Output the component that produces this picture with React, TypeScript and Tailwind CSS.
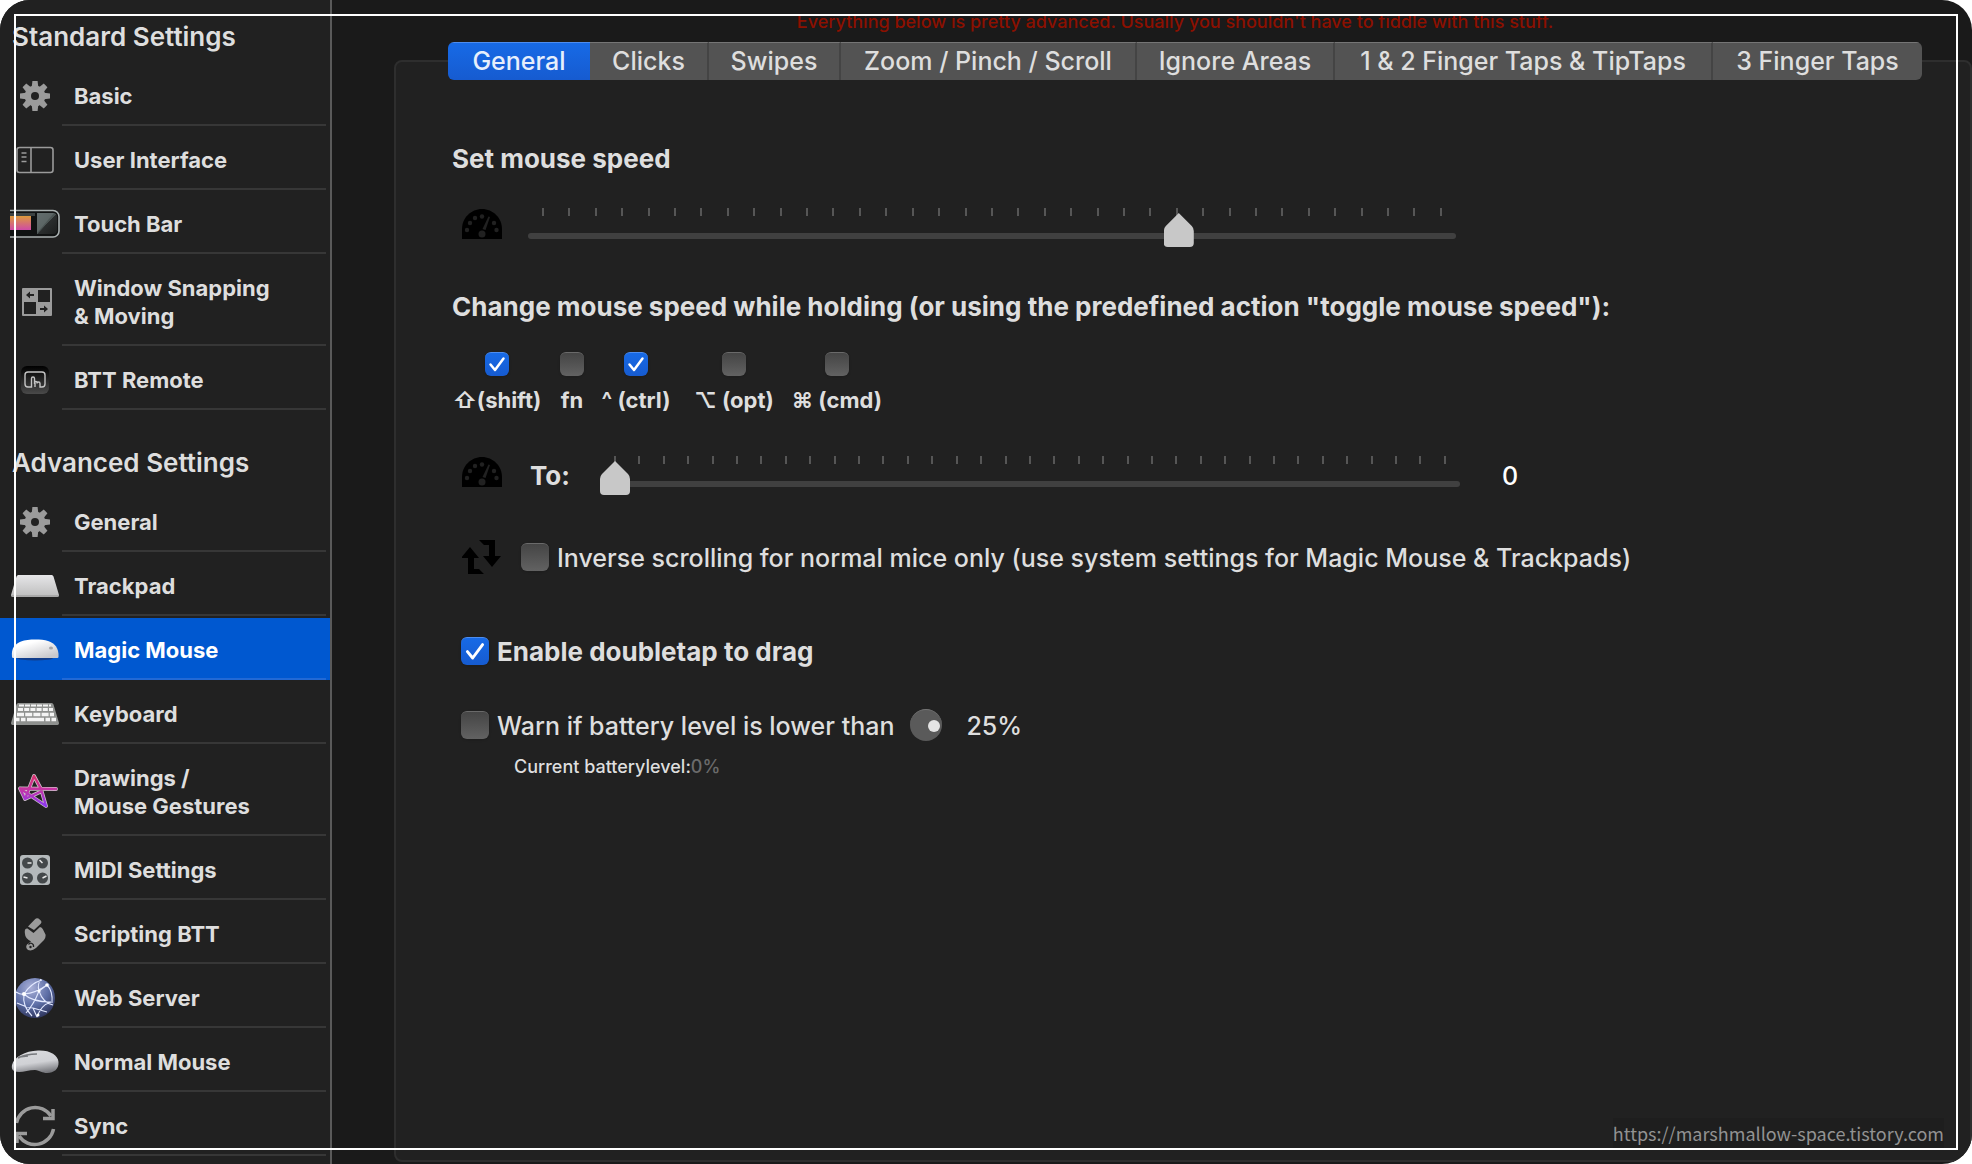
import { useState, type ReactNode } from "react";

type SidebarItem = {
  id: string;
  label: string[];
  icon: ReactNode;
};

function GearIcon() {
  return (
    <svg width="30" height="30" viewBox="0 0 30 30" className="text-[#9b9b9b]">
      <g fill="currentColor">
        {[0, 45, 90, 135].map((angle) => (
          <path key={angle} d="M12.4 0h5.2l.7 6v18l-.7 6h-5.2l-.7-6V6z" transform={`rotate(${angle} 15 15)`} />
        ))}
        <circle cx="15" cy="15" r="10.4" />
      </g>
      <circle cx="15" cy="15" r="4" fill="#212121" />
    </svg>
  );
}

function InterfaceIcon() {
  return (
    <svg width="38" height="28" viewBox="0 0 38 28" fill="none" stroke="#9b9b9b">
      <rect x="1" y="1.5" width="36" height="25" rx="2.5" strokeWidth="1.6" />
      <path d="M15 1.5v25" strokeWidth="1.6" />
      <path d="M5.5 7h5M5.5 11h5M5.5 15.5h5" strokeWidth="1.6" />
    </svg>
  );
}

function TouchBarIcon() {
  return (
    <svg width="50" height="30" viewBox="0 0 50 30" className="shrink-0">
      <defs>
        <linearGradient id="tb-color" x1="0" y1="0" x2="0" y2="1">
          <stop offset="0" stopColor="#dd9a3b" />
          <stop offset="1" stopColor="#cf4aa6" />
        </linearGradient>
        <linearGradient id="tb-glass" x1="0" y1="0" x2="1" y2="1">
          <stop offset="0" stopColor="#5c6665" />
          <stop offset="0.5" stopColor="#4a5352" />
          <stop offset="0.51" stopColor="#2b2e2e" />
          <stop offset="1" stopColor="#1c1e1e" />
        </linearGradient>
      </defs>
      <path d="M0 1.5h43a6 6 0 0 1 6 6v14.500a6 6 0 0 1-6 6H0" fill="#101212" stroke="#a9b0b0" strokeWidth="1.6" />
      <path d="M0 4h25v3H0z" fill="#3c4241" />
      <path d="M0 7h21v14H0z" fill="url(#tb-color)" />
      <path d="M27 4h16a4 4 0 0 1 4 4v13a4 4 0 0 1-4 4H27z" fill="url(#tb-glass)" />
      <path d="M27 4h17L27 24z" fill="#6b7675" opacity="0.5" />
    </svg>
  );
}

function SnappingIcon() {
  return (
    <svg width="34" height="28" viewBox="-4 0 34 28">
      <rect width="30" height="28" rx="1" fill="#9b9b9b" />
      <path d="M16 2h12v12H16zM2 14h12v12H2z" fill="#212121" />
      <path d="M4 7l4-3.500V6h4v2H8v2.500zM26 21l-4-3.500V20h-4v2h4v2.500z" fill="#212121" />
    </svg>
  );
}

function RemoteIcon() {
  return (
    <svg width="30" height="30" viewBox="0 0 30 30">
      <defs>
        <linearGradient id="remote" x1="0" y1="0" x2="0" y2="1">
          <stop offset="0" stopColor="#000" />
          <stop offset="1" stopColor="#4a4a4a" />
        </linearGradient>
      </defs>
      <rect x="1" y="1" width="28" height="28" rx="6" fill="url(#remote)" />
      <path
        d="M11.500 22H8a3 3 0 0 1-3-3V10a3 3 0 0 1 3-3h14a3 3 0 0 1 3 3v9a3 3 0 0 1-3 3h-2v-3.500a1.500 1.500 0 0 0-3 0V17a1.500 1.500 0 0 0-2.500 0v-3.500a1.500 1.500 0 0 0-3 0zM15 17v5"
        fill="none"
        stroke="#c4c4c4"
        strokeWidth="1.4"
      />
    </svg>
  );
}

function TrackpadIcon() {
  return (
    <svg width="48" height="24" viewBox="0 0 48 24">
      <defs>
        <linearGradient id="trackpad" x1="0" y1="0" x2="0" y2="1">
          <stop offset="0" stopColor="#e6e6e8" />
          <stop offset="1" stopColor="#bdbdbd" />
        </linearGradient>
      </defs>
      <path d="M7.500 1h33a2 2 0 0 1 2 1.500L48 21a2 2 0 0 1-1.500 2h-45A2 2 0 0 1 0 21L5.500 2.500a2 2 0 0 1 2-1.500z" fill="url(#trackpad)" />
      <path d="M.5 22h47" stroke="#929292" />
    </svg>
  );
}

function MagicMouseIcon() {
  return (
    <svg width="48" height="24" viewBox="0 0 48 24">
      <defs>
        <linearGradient id="magic" x1="0" y1="0" x2="0.7" y2="1">
          <stop offset="0.3" stopColor="#fff" />
          <stop offset="1" stopColor="#c9c9cd" />
        </linearGradient>
      </defs>
      <ellipse cx="24" cy="20" rx="18" ry="2.5" fill="#123e8c" />
      <path d="M1 19C0 10 4 6 10 3.500 17 1 30 1 37 3c7 2.500 11 7 10.500 16-.1.700-.8 1-1.500 1H2.500C1.700 20 1.100 19.700 1 19z" fill="url(#magic)" />
      <ellipse cx="40" cy="10" rx="2" ry="1.5" fill="#a5a5a8" />
    </svg>
  );
}

function KeyboardIcon() {
  return (
    <svg width="48" height="24" viewBox="0 0 48 24">
      <path d="M7.500 1h33a2 2 0 0 1 2 1.500L48 21a2 2 0 0 1-1.500 2h-45A2 2 0 0 1 0 21L5.500 2.500a2 2 0 0 1 2-1.500z" fill="#8f918f" />
      <g stroke="#f4f4f4" fill="none">
        <path d="M8 3.500h32" strokeWidth="2" strokeDasharray="5 1" />
        <path d="M7 7.500h35" strokeWidth="3" strokeDasharray="5 1.2" />
        <path d="M6 12.500h37" strokeWidth="3.5" strokeDasharray="7 1.2" />
        <path d="M4 17.500h4.500M10 17.500h4.500M16 17.500h17M34.500 17.500h4.500M40.500 17.500h4.500" strokeWidth="3.5" />
      </g>
    </svg>
  );
}

function StarIcon() {
  const star = "M44 15 8 14.500 13 25 22 2 29 15 34 32 8 14.500M13 25 28 18";
  return (
    <svg width="46" height="36" viewBox="0 0 46 36" fill="none" strokeLinejoin="round" strokeLinecap="round">
      <defs>
        <linearGradient id="star" x1="0" y1="0" x2="0" y2="1">
          <stop offset="0" stopColor="#d8336f" />
          <stop offset="0.45" stopColor="#c535a5" />
          <stop offset="1" stopColor="#8b38f2" />
        </linearGradient>
      </defs>
      <path d={star} stroke="#cfc3cc" strokeWidth="3.8" />
      <path d={star} stroke="url(#star)" strokeWidth="2.4" />
    </svg>
  );
}

function MidiIcon() {
  return (
    <svg width="32" height="32" viewBox="0 0 32 32">
      <rect x="1" y="1" width="30" height="30" rx="3" fill="#b4b9bb" />
      {[
        [8.5, 9, 4, 0],
        [23.5, 9, -3, -3],
        [8.5, 24, -4, -1],
        [23.5, 24, 4, -2],
      ].map(([x, y, dx, dy]) => (
        <g key={`${x}-${y}`}>
          <circle cx={x} cy={y} r="5.5" fill="#44484a" />
          <path d={`M${x} ${y}l${dx} ${dy}`} stroke="#e8e8e8" strokeWidth="1.5" />
        </g>
      ))}
    </svg>
  );
}

function ScriptIcon() {
  return (
    <svg width="22" height="33" viewBox="0 0 22 33" fill="#9b9b9b">
      <path d="M4 8.500 11 1.200a3 3 0 0 1 3.500-.7l2 1.800a2.500 2.500 0 0 1 .2 3.500L10 12z" />
      <path d="M1 16Q0 10 3.500 10.500L9.500 15 16 9q2 0 3 2.500l2.500 5q.5 3-1.500 5.500l-8 8Q8 33.500 4 32q-3-2-1-5.500L7 23.500Q1 20 1 16z" />
      <path d="M4.500 26.500c2-2.500 5.500-1 5 2.500" fill="none" stroke="#212121" strokeWidth="1.3" />
      <circle cx="6.5" cy="29" r="1.2" fill="#212121" />
    </svg>
  );
}

function GlobeIcon() {
  return (
    <svg width="42" height="42" viewBox="0 0 42 42">
      <defs>
        <radialGradient id="globe" cx="0.4" cy="0.25" r="0.8">
          <stop offset="0" stopColor="#a9b0d8" />
          <stop offset="0.55" stopColor="#5d6ea6" />
          <stop offset="1" stopColor="#2b3157" />
        </radialGradient>
      </defs>
      <circle cx="21" cy="21" r="20" fill="url(#globe)" />
      <path
        d="M2 15q5 3 8 2Q17 6 28 3M10 17q12-1 23-9M10 17q8 8 27 8M10 17q-2 12 8 22M25 14q-2-7 2-12M25 14q4 12 14 14M25 14Q20 27 12 36M25 14l8-6q6 6 5 18M23 40q4-12 14-15M19 31l14 4M3 26q8 4 16 5l4 9"
        fill="none"
        stroke="#e3e9ff"
        strokeWidth="1.1"
      />
      <g fill="#fff">
        <circle cx="10" cy="17" r="2" />
        <circle cx="25" cy="14" r="1.6" />
        <circle cx="33" cy="8" r="1.8" />
        <circle cx="24" cy="38" r="1.5" />
      </g>
    </svg>
  );
}

function NormalMouseIcon() {
  return (
    <svg width="48" height="26" viewBox="0 0 48 26">
      <defs>
        <linearGradient id="normal" x1="0.3" y1="0" x2="0.6" y2="1">
          <stop offset="0" stopColor="#d9dadd" />
          <stop offset="0.55" stopColor="#d0d1d5" />
          <stop offset="1" stopColor="#77787d" />
        </linearGradient>
      </defs>
      <path d="M1 16C3 8 14 2 27 1.500 39 1 47 6 47.500 13 48 20 43 24 36 24c-5 0-7-2.500-12-3-8 0-15 4-21 1-2-1-2.500-3-2-6z" fill="url(#normal)" />
      <path d="M7 9q8-4 19-4M8 8l9-1" stroke="#77797d" strokeWidth="1.6" fill="none" />
    </svg>
  );
}

function SyncIcon() {
  return (
    <svg width="42" height="42" viewBox="0 0 42 42" fill="none" stroke="#9b9b9b" strokeWidth="3.5">
      <path d="M2.500 18A19 19 0 0 1 37 11" />
      <path d="M39 4v9.500H29" />
      <path d="M39.500 24A19 19 0 0 1 5 31" />
      <path d="M3 38v-9.500h10" />
    </svg>
  );
}

function GaugeIcon() {
  return (
    <svg width="40" height="31" viewBox="0 -1 40 31" className="shrink-0">
      <path d="M0 30V20C0 9 9 0 20 0s20 9 20 20v10z" fill="#000" />
      <g fill="#212121">
        <circle cx="5" cy="21" r="2.2" />
        <circle cx="8" cy="14" r="2.2" />
        <circle cx="13" cy="9" r="2.2" />
        <circle cx="20" cy="7.5" r="2.2" />
        <circle cx="32" cy="14" r="2.2" />
        <circle cx="34.5" cy="21" r="2.2" />
        <circle cx="20" cy="25" r="3.5" />
        <path d="M26.500 7.500 28 8l-4.500 13-3-1z" />
      </g>
    </svg>
  );
}

function InvertIcon() {
  return (
    <svg width="40" height="34" viewBox="0 0 40 34" fill="#000" className="shrink-0">
      <path d="M-1 18 8 7l9 11h-5v11h5l5 5H6V18z" />
      <path d="M17 0h16v16h6l-9 11-9-11h6V5h-5z" />
    </svg>
  );
}

const standardItems: SidebarItem[] = [
  { id: "basic", label: ["Basic"], icon: <GearIcon /> },
  { id: "ui", label: ["User Interface"], icon: <InterfaceIcon /> },
  { id: "touchbar", label: ["Touch Bar"], icon: <TouchBarIcon /> },
  { id: "snapping", label: ["Window Snapping", "& Moving"], icon: <SnappingIcon /> },
  { id: "remote", label: ["BTT Remote"], icon: <RemoteIcon /> },
];

const advancedItems: SidebarItem[] = [
  { id: "general", label: ["General"], icon: <GearIcon /> },
  { id: "trackpad", label: ["Trackpad"], icon: <TrackpadIcon /> },
  { id: "magic-mouse", label: ["Magic Mouse"], icon: <MagicMouseIcon /> },
  { id: "keyboard", label: ["Keyboard"], icon: <KeyboardIcon /> },
  { id: "drawings", label: ["Drawings /", "Mouse Gestures"], icon: <StarIcon /> },
  { id: "midi", label: ["MIDI Settings"], icon: <MidiIcon /> },
  { id: "scripting", label: ["Scripting BTT"], icon: <ScriptIcon /> },
  { id: "web", label: ["Web Server"], icon: <GlobeIcon /> },
  { id: "normal-mouse", label: ["Normal Mouse"], icon: <NormalMouseIcon /> },
  { id: "sync", label: ["Sync"], icon: <SyncIcon /> },
];

const tabs = [
  "General",
  "Clicks",
  "Swipes",
  "Zoom / Pinch / Scroll",
  "Ignore Areas",
  "1 & 2 Finger Taps & TipTaps",
  "3 Finger Taps",
];

const modifiers = [
  { id: "shift", label: "⇧(shift)", checked: true, width: "w-[90px]" },
  { id: "fn", label: "fn", checked: false, width: "w-[60px]" },
  { id: "ctrl", label: "^ (ctrl)", checked: true, width: "w-[68px]" },
  { id: "opt", label: "⌥ (opt)", checked: false, width: "w-[128px]" },
  { id: "cmd", label: "⌘ (cmd)", checked: false, width: "w-[78px]" },
];

type SidebarListProps = {
  items: SidebarItem[];
  selected: string;
  onSelect: (id: string) => void;
};

function SidebarList({ items, selected, onSelect }: SidebarListProps) {
  return (
    <ul className="flex flex-col gap-0.5">
      {items.map((item) => {
        const active = item.id === selected;
        return (
          <li key={item.id}>
            <button
              type="button"
              onClick={() => onSelect(item.id)}
              className={`flex w-full pr-1 pl-[11px] text-left ${active ? "bg-[#0058d0] text-white" : "text-[#dedede]"}`}
            >
              <span className="mr-[3px] flex w-12 shrink-0 items-center justify-center self-stretch pt-0.5">{item.icon}</span>
              <span
                className={`flex-1 border-b-2 pt-[18px] pb-[14px] pl-3 text-[22px] leading-7 font-bold whitespace-nowrap ${
                  active ? "border-[#2269d5]" : "border-[#373737]"
                }`}
              >
                {item.label.map((line) => (
                  <span key={line} className="block">
                    {line}
                  </span>
                ))}
              </span>
            </button>
          </li>
        );
      })}
    </ul>
  );
}

type CheckboxProps = {
  id: string;
  defaultChecked?: boolean;
  small?: boolean;
};

function Checkbox({ id, defaultChecked = false, small = false }: CheckboxProps) {
  return (
    <span className={`relative block shrink-0 ${small ? "size-6" : "size-7"}`}>
      <input
        id={id}
        type="checkbox"
        defaultChecked={defaultChecked}
        className="peer block size-full appearance-none rounded-[6px] border-t border-[#6a6a6a] bg-linear-to-b from-[#454545] to-[#626262] shadow-sm checked:border-[#4d8df0] checked:from-[#176ae6] checked:to-[#165bd0]"
      />
      <svg
        viewBox="0 0 24 24"
        fill="none"
        stroke="#fff"
        strokeWidth="2.5"
        strokeLinecap="round"
        strokeLinejoin="round"
        className="pointer-events-none absolute inset-0 hidden size-full peer-checked:block"
      >
        <path d="M5.500 12.500 10 18 18.500 6.500" />
      </svg>
    </span>
  );
}

type SpeedSliderProps = {
  label: string;
  value: number;
  onChange: (value: number) => void;
};

function SpeedSlider({ label, value, onChange }: SpeedSliderProps) {
  return (
    <div className="flex-1">
      <div className="flex h-2 justify-between px-[14px]">
        {Array.from({ length: 35 }, (_, i) => (
          <span key={i} className="w-0.5 bg-[#565656]" />
        ))}
      </div>
      <input
        type="range"
        aria-label={label}
        min={0}
        max={1000}
        value={value}
        onChange={(e) => onChange(Number(e.target.value))}
        className="relative -mt-[3px] block h-[34px] w-full appearance-none bg-transparent [&::-webkit-slider-runnable-track]:mt-3 [&::-webkit-slider-runnable-track]:h-1.5 [&::-webkit-slider-runnable-track]:rounded-full [&::-webkit-slider-runnable-track]:bg-[#404040] [&::-webkit-slider-thumb]:-mt-5 [&::-webkit-slider-thumb]:h-[34px] [&::-webkit-slider-thumb]:w-[30px] [&::-webkit-slider-thumb]:appearance-none [&::-webkit-slider-thumb]:bg-[#c8c8c8] [&::-webkit-slider-thumb]:[clip-path:path('M15_0_L28_13_Q30_15_30_18_V30_Q30_34_26_34_H4_Q0_34_0_30_V18_Q0_15_2_13_Z')]"
      />
    </div>
  );
}

export default function App() {
  const [selected, setSelected] = useState("magic-mouse");
  const [tab, setTab] = useState("General");
  const [speed, setSpeed] = useState(708);
  const [altSpeed, setAltSpeed] = useState(0);

  return (
    <div className="min-h-screen bg-white font-['Inter','Liberation_Sans',sans-serif]">
      <div className="relative flex min-h-screen overflow-hidden rounded-[30px] bg-[#1a1a1a] text-[#dedede]">
        <nav className="w-[332px] shrink-0 border-r-2 border-[#5a5a5a] bg-[#212121] pt-[21px]">
          <h2 className="mb-[11px] pl-3 text-[26px] leading-8 font-semibold">Standard Settings</h2>
          <SidebarList items={standardItems} selected={selected} onSelect={setSelected} />
          <h2 className="mt-[37px] mb-[11px] pl-3 text-[26px] leading-8 font-semibold">Advanced Settings</h2>
          <SidebarList items={advancedItems} selected={selected} onSelect={setSelected} />
        </nav>

        <main className="flex min-w-0 flex-1 flex-col pb-0.5 pl-[62px]">
          <p className="h-[42px] pt-[10px] pr-4 text-center text-[18px] leading-6 font-medium text-[#8c1000]">
            Everything below is pretty advanced. Usually you shouldn't have to fiddle with this stuff.
          </p>

          <div
            role="tablist"
            className="relative z-10 mr-[50px] -mb-5 ml-[54px] grid h-[38px] shrink-0 grid-cols-[142fr_119fr_132fr_296fr_198fr_378fr_209fr] overflow-hidden rounded-md"
          >
            {tabs.map((name) => (
              <button
                key={name}
                type="button"
                role="tab"
                aria-selected={name === tab}
                onClick={() => setTab(name)}
                className={`border-t pb-0.5 text-[25px] leading-8 font-medium whitespace-nowrap ${
                  name === tab
                    ? "border-[#4d8df0] bg-linear-to-b from-[#176ae6] to-[#165bd0] text-[#e6effc]"
                    : "border-r-2 border-t-[#757575] border-r-[#444] bg-[#535353] last:border-r-0"
                }`}
              >
                {name}
              </button>
            ))}
          </div>

          <section className="flex-1 rounded-lg border-2 border-[#2e2e2e] bg-[#212121] pt-[81px] pl-14">
            <h3 className="text-[26px] leading-8 font-bold">Set mouse speed</h3>
            <div className="mt-[33px] mr-[514px] ml-[10px] flex items-start gap-[26px]">
              <GaugeIcon />
              <SpeedSlider label="Mouse speed" value={speed} onChange={setSpeed} />
            </div>

            <h3 className="mt-11 text-[26px] leading-8 font-bold whitespace-nowrap">
              Change mouse speed while holding (or using the predefined action "toggle mouse speed"):
            </h3>
            <div className="mt-[29px] flex">
              {modifiers.map((modifier) => (
                <div key={modifier.id} className={`flex flex-col items-center gap-[10px] ${modifier.width}`}>
                  <Checkbox id={modifier.id} defaultChecked={modifier.checked} small />
                  <label htmlFor={modifier.id} className="text-[22px] leading-7 font-bold whitespace-nowrap">
                    {modifier.label}
                  </label>
                </div>
              ))}
            </div>

            <div className="mt-[42px] mr-[445px] ml-[10px] flex items-start">
              <GaugeIcon />
              <span className="mt-1 ml-7 w-[70px] text-[26px] leading-8 font-bold">To:</span>
              <SpeedSlider label="Mouse speed while holding" value={altSpeed} onChange={setAltSpeed} />
              <output className="mt-1 ml-[42px] w-[23px] text-[25px] leading-8 font-medium text-white">{altSpeed}</output>
            </div>

            <div className="mt-[45px] ml-[10px] flex items-center">
              <InvertIcon />
              <span className="mr-2 ml-[19px]">
                <Checkbox id="inverse" />
              </span>
              <label htmlFor="inverse" className="pt-0.5 text-[25px] leading-8 font-medium whitespace-nowrap">
                Inverse scrolling for normal mice only (use system settings for Magic Mouse &amp; Trackpads)
              </label>
            </div>

            <div className="mt-[60px] ml-[9px] flex items-center gap-2">
              <Checkbox id="doubletap" defaultChecked />
              <label htmlFor="doubletap" className="pt-0.5 text-[26px] leading-8 font-bold">
                Enable doubletap to drag
              </label>
            </div>

            <div className="mt-10 ml-[9px] flex items-center gap-2">
              <Checkbox id="battery" />
              <label htmlFor="battery" className="pt-0.5 text-[25px] leading-8 font-medium">
                Warn if battery level is lower than
              </label>
              <input
                type="range"
                aria-label="Battery warning level"
                min={0}
                max={28}
                defaultValue={25}
                className="ml-2 block size-8 appearance-none rounded-full border-t border-[#757575] bg-[#5a5a5a] [&::-webkit-slider-thumb]:size-3 [&::-webkit-slider-thumb]:appearance-none [&::-webkit-slider-thumb]:rounded-full [&::-webkit-slider-thumb]:bg-[#e4e4e4]"
              />
              <span className="ml-4 pt-0.5 text-[25px] leading-8 font-medium">25%</span>
            </div>
            <p className="mt-[13px] ml-[62px] text-[18px] leading-6 font-medium">
              Current batterylevel:<span className="text-[#6b6b6b]">0%</span>
            </p>
          </section>
        </main>

        {/* frame and address printed over the window */}
        <div className="pointer-events-none absolute inset-[14px] z-20 flex items-end justify-end border-2 border-white pr-3">
          <span className="bg-[#1e1e1e] font-['Noto_Sans_CJK_KR',sans-serif] text-[18px] leading-[30px] text-[#929292]">
            https://marshmallow-space.tistory.com
          </span>
        </div>
      </div>
    </div>
  );
}
